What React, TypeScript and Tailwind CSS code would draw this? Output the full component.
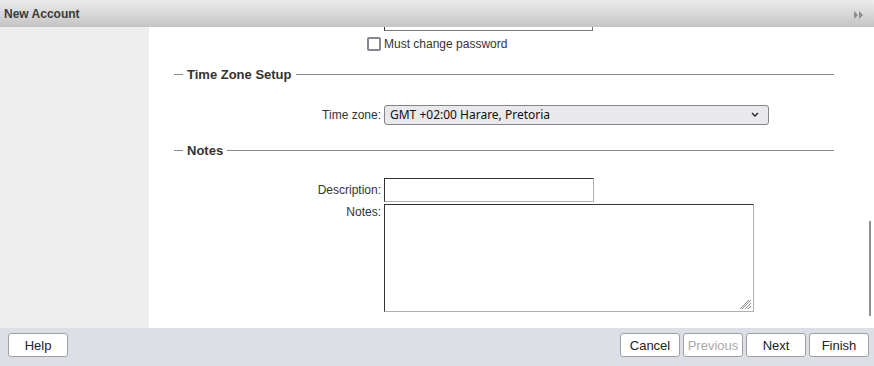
import React from 'react';

const Legend: React.FC<{ title: string }> = ({ title }) => (
  <div className="flex items-center ml-[25px] w-[660px] h-[16px]">
    <div className="w-[9px] h-px bg-[#8a8a8a]"></div>
    <span className="px-[4px] text-[13px] font-bold text-[#333] leading-none">{title}</span>
    <div className="flex-1 h-px bg-[#8a8a8a]"></div>
  </div>
);

const FooterButton: React.FC<{ label: string; disabled?: boolean }> = ({ label, disabled }) => (
  <button
    className={`w-[60px] h-[24px] bg-white border border-[#a0a0a0] rounded-[3px] text-[13px] leading-none ${
      disabled ? 'text-[#a8a8a8]' : 'text-[#222]'
    }`}
  >
    {label}
  </button>
);

const App: React.FC = () => {
  return (
    <div className="w-[874px] h-[366px] flex flex-col overflow-hidden font-['Liberation_Sans',Arial,sans-serif] text-[12px] text-[#333]">
      {/* header */}
      <div className="h-[27px] flex items-center justify-between px-[4px] bg-gradient-to-b from-[#ececec] to-[#c4c4c4]">
        <span className="text-[12px] font-bold text-[#3a3a3a]">New Account</span>
        <svg width="10" height="8" viewBox="0 0 10 8" className="mr-[6px] mt-[3px]">
          <path d="M0 0 L4 4 L0 8 Z" fill="#8c8c8c" />
          <path d="M5 0 L9 4 L5 8 Z" fill="#8c8c8c" />
        </svg>
      </div>

      {/* body */}
      <div className="flex-1 flex min-h-0">
        <div className="w-[149px] bg-[#eeeeee]"></div>
        <div className="relative flex-1 bg-white overflow-hidden">
          <div className="flex flex-col">
            {/* partially scrolled password input */}
            <div className="ml-[235px] mt-[-19px] w-[209px] h-[23px] border border-[#767676] border-t-[#333] border-l-[#333]"></div>

            <div className="flex items-center h-[14px] mt-[6px]">
              <div className="w-[232px] flex justify-end">
                <div className="w-[14px] h-[14px] rounded-[2px] border-2 border-[#8a8595] bg-white"></div>
              </div>
              <span className="ml-[3px] leading-none">Must change password</span>
            </div>

            <div className="mt-[15px]">
              <Legend title="Time Zone Setup" />
            </div>

            <div className="flex items-center mt-[23px]">
              <div className="w-[232px] text-right">Time zone:</div>
              <div className="ml-[3px] w-[385px] h-[20px] flex items-center justify-between pl-[5px] pr-[9px] bg-[#e9e9ed] border border-[#858585] rounded-[3px] font-['Noto_Sans',sans-serif] text-[12px] text-[#111]">
                <span className="leading-none">GMT +02:00 Harare, Pretoria</span>
                <svg width="8" height="6" viewBox="0 0 8 6">
                  <path d="M1 1 L4 4 L7 1" stroke="#222" strokeWidth="1.4" fill="none" />
                </svg>
              </div>
            </div>

            <div className="mt-[17px]">
              <Legend title="Notes" />
            </div>

            <div className="flex items-center mt-[20px]">
              <div className="w-[232px] text-right">Description:</div>
              <div className="ml-[3px] w-[210px] h-[24px] bg-white border border-[#b0b0b0] border-t-[#333] border-l-[#333]"></div>
            </div>

            <div className="flex items-start mt-[2px]">
              <div className="w-[232px] text-right leading-none pt-[2px]">Notes:</div>
              <div className="relative ml-[3px] w-[370px] h-[108px] bg-white border border-[#b0b0b0] border-t-[#333] border-l-[#333]">
                <svg width="13" height="13" viewBox="0 0 13 13" className="absolute right-[1px] bottom-[1px]">
                  <path d="M12 3 L3 12 M12 6 L6 12 M12 9 L9 12 M10 3 L1 12" stroke="#8a8a8a" strokeWidth="1" />
                </svg>
              </div>
            </div>
          </div>

          {/* overlay scrollbar */}
          <div className="absolute left-[720px] top-[194px] w-[2px] h-[95px] bg-[#8f8f8f]"></div>
        </div>
      </div>

      {/* footer */}
      <div className="h-[38px] flex items-start justify-between pt-[5px] pl-[8px] pr-[5px] bg-[#dcdfe5]">
        <FooterButton label="Help" />
        <div className="flex gap-[3px]">
          <FooterButton label="Cancel" />
          <FooterButton label="Previous" disabled />
          <FooterButton label="Next" />
          <FooterButton label="Finish" />
        </div>
      </div>
    </div>
  );
};

export default App;
